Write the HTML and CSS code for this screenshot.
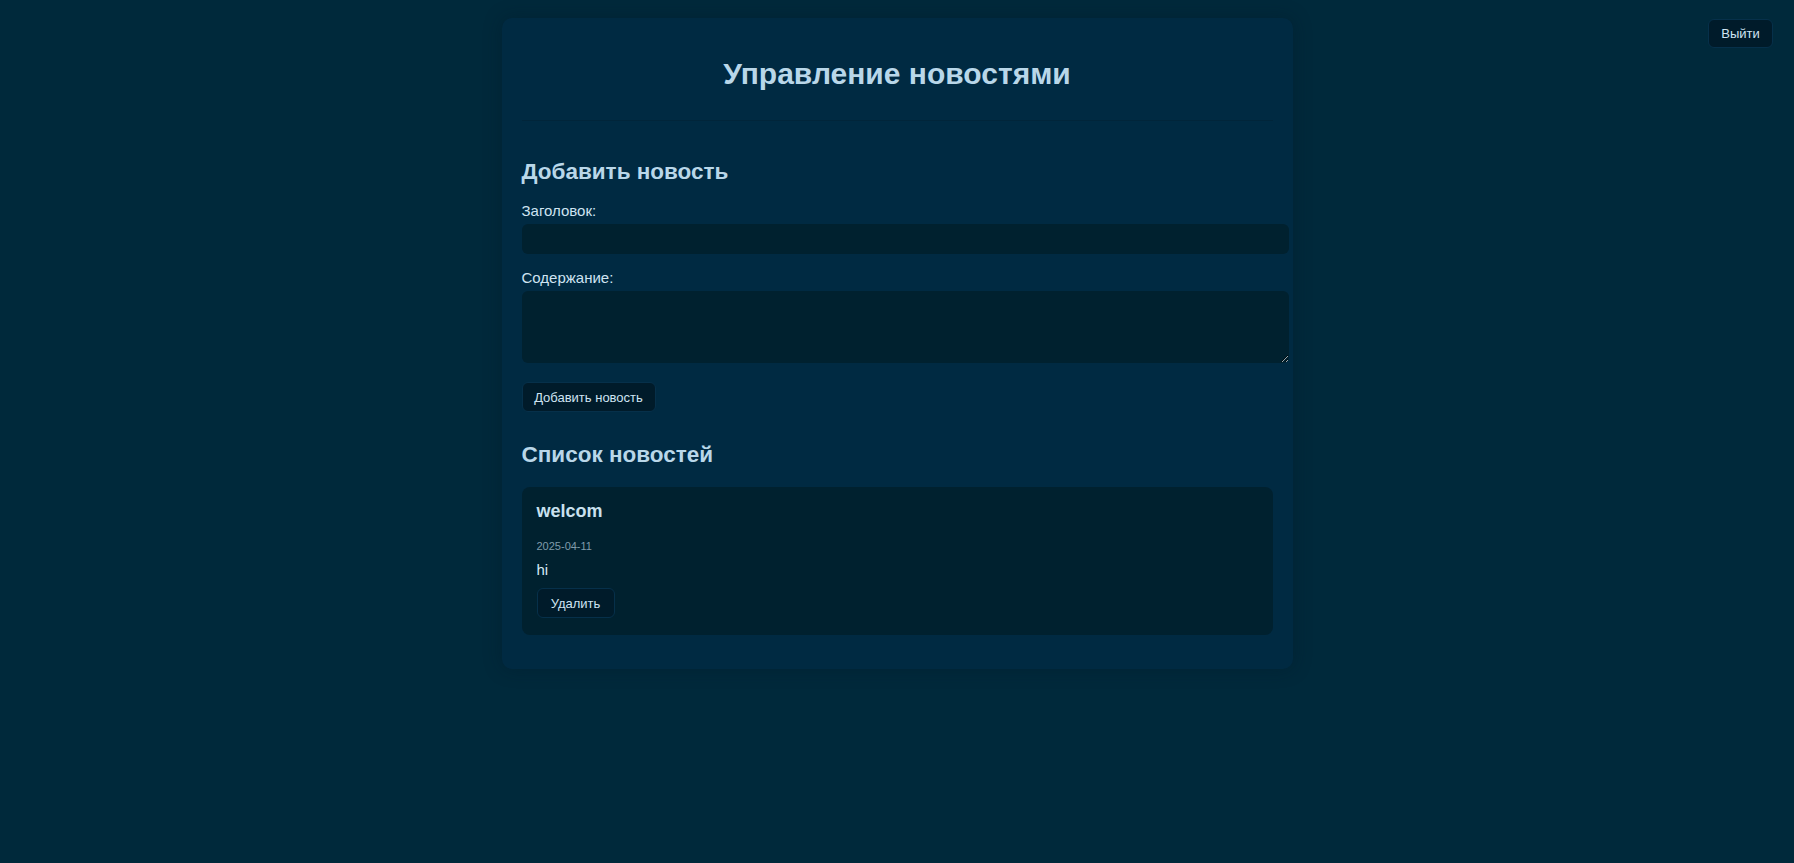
FILE: index.html
```html
<!DOCTYPE html>
<html lang="ru">
<head>
<meta charset="utf-8">
<title>Управление новостями</title>
<link rel="stylesheet" href="styles.css">
</head>
<body>
<button class="btn logout">Выйти</button>
<main class="container">
  <header class="page-header">
    <h1>Управление новостями</h1>
  </header>
  <section class="add-section">
    <h2>Добавить новость</h2>
    <form class="news-form">
      <label class="field-label" for="title">Заголовок:</label>
      <input class="field-input" id="title" type="text">
      <label class="field-label" for="content">Содержание:</label>
      <textarea class="field-textarea" id="content"></textarea>
      <button type="button" class="btn add-btn">Добавить новость</button>
    </form>
  </section>
  <section class="list-section">
    <h2>Список новостей</h2>
    <article class="news-card">
      <h3>welcom</h3>
      <div class="news-date">2025-04-11</div>
      <p class="news-text">hi</p>
      <button type="button" class="btn del-btn">Удалить</button>
    </article>
  </section>
</main>
</body>
</html>
```

FILE: styles.css
```css
html, body {
  margin: 0;
  padding: 0;
}
body {
  background: #00293b;
  font-family: "Liberation Sans", Arial, sans-serif;
  color: #cfe4f2;
  min-height: 863px;
}
.btn {
  font-family: "Liberation Sans", Arial, sans-serif;
  background: #001b2a;
  color: #cfe4f2;
  border: 1px solid #06304a;
  border-radius: 6px;
  font-size: 13px;
  cursor: pointer;
}
.logout {
  position: absolute;
  top: 19px;
  right: 21px;
  width: 65px;
  height: 29px;
  padding: 0;
}
.container {
  width: 751px;
  margin: 18px auto 0;
  padding: 20px;
  background: #002a42;
  border-radius: 10px;
  box-shadow: 0 0 18px rgba(0, 24, 36, 0.35);
}
.page-header {
  padding-bottom: 10px;
  border-bottom: 1px solid #01253a;
  margin-bottom: 38px;
}
h1 {
  margin: 20px 0;
  text-align: center;
  font-size: 30px;
  line-height: 32px;
  color: #b9d7e9;
  font-weight: bold;
}
h2 {
  margin: 0 0 17px;
  font-size: 22.5px;
  line-height: 26px;
  color: #b9d7e9;
}
.news-form {
  display: flex;
  flex-direction: column;
  align-items: flex-start;
}
.field-label {
  font-size: 15px;
  line-height: 18px;
  color: #cfe4f2;
  margin-bottom: 4px;
}
.field-input, .field-textarea {
  box-sizing: content-box;
  width: 100%;
  padding: 7px 8px;
  border: 0;
  border-radius: 6px;
  background: #00212f;
  color: #cfe4f2;
  font-family: "Liberation Sans", Arial, sans-serif;
  font-size: 14px;
  line-height: 16px;
  margin: 0;
}
.field-input {
  margin-bottom: 15px;
}
.field-textarea {
  height: 58px;
  resize: vertical;
  margin-bottom: 19px;
}
.add-btn {
  width: 134px;
  height: 30px;
  padding: 0;
  margin-bottom: 30px;
}
.list-section h2 {
  margin-bottom: 19px;
}
.news-card {
  background: #00212f;
  border-radius: 8px;
  padding: 13px 15px 17px;
  margin-bottom: 14px;
}
.news-card h3 {
  margin: 0 0 18px;
  font-size: 18px;
  line-height: 22px;
  color: #c9e1ef;
}
.news-date {
  font-size: 11px;
  line-height: 13px;
  color: #7f9bab;
  margin-bottom: 8px;
}
.news-text {
  margin: 0 0 10px;
  font-size: 15px;
  line-height: 17px;
  font-weight: normal;
  color: #d6e9f5;
}
.del-btn {
  width: 78px;
  height: 30px;
  padding: 0;
}
```
